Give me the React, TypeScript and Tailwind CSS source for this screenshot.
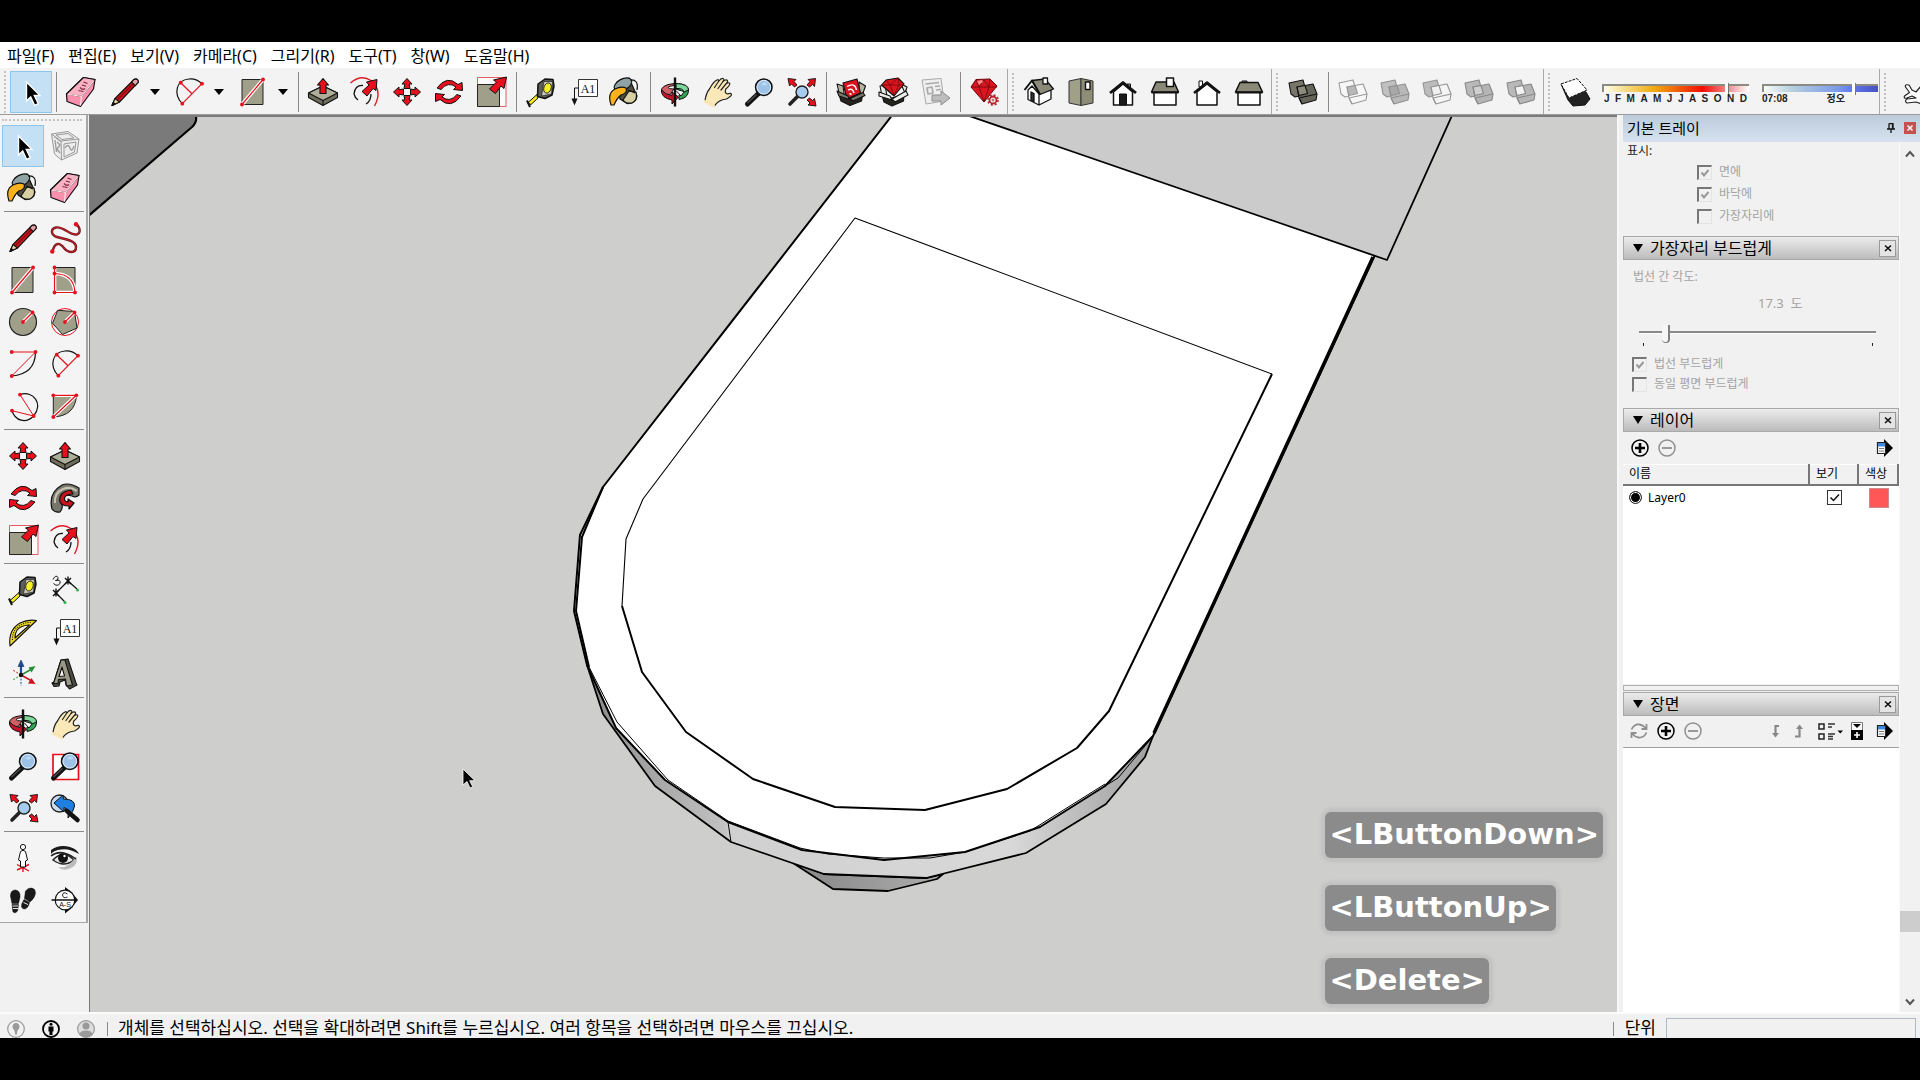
import React from "react";

const RED = "#e8101c";
const OLIVE = "#a09f8a";

/* ---------- icon drawings, each on a 32 x 32 grid ---------- */

const Cursor = () => (
  <path d="M11.5 6V25l4.2-4 4 8.5 3.6-1.8-4-8.2h5.7z" fill="#000" stroke="#fff" strokeWidth="1.4" />
);

const Eraser = () => (
  <g stroke="#111" strokeWidth="1.2" strokeLinejoin="round">
    <path d="M18.5 1.5 30 3.5 28.5 13 15.5 30.5 2 25.5 1.5 18z" fill="#fb8fae" />
    <path d="M18.5 1.5 30 3.5 16.5 20.5 1.5 18z" fill="#fbb0c4" />
    <path d="M29 4.5 16.5 20.5 2.5 18.2M16.5 20.5 15.5 29.5" stroke="#ffe6ec" fill="none" />
    <path d="M13.5 14.5l5 1M15 11.5q3 3 5 1M17 9l4 1.2M18.5 6l4 1.5" stroke="#7a2a45" fill="none" />
  </g>
);

const Pencil = () => (
  <g stroke="#111" strokeWidth="1.1" strokeLinejoin="round">
    <path d="M3 29.5 6 22.5 25 3.5q4-2 4.5 2.5L10.5 26z" fill="#d2141c" />
    <path d="M3 29.5 6 22.5 10.5 26z" fill="#e9d9a5" />
    <path d="M3 29.5l1.3-3 1.8 1.4z" fill="#111" />
    <path d="M22.5 6l3.8 3.6 3-3.4q0-4-4.3-2.8z" fill="#e6a0a8" />
    <path d="M8.5 23.5 24 8" stroke="#7d0a10" />
  </g>
);

const Freehand = () => (
  <g>
    <path
      d="M27 2c5 4 5 11-1 10.500S13 4 7 5.500 2 13 8 15s19 3 19 10-8 6-12 1-9-7-11.500 3.500"
      fill="none" stroke="#70151b" strokeWidth="2.4"
    />
    <path
      d="M27 2c5 4 5 11-1 10.500S13 4 7 5.500 2 13 8 15s19 3 19 10-8 6-12 1-9-7-11.500 3.500"
      fill="none" stroke="#d3202a" strokeWidth="1"
    />
    <circle cx="27" cy="2.200" r="2.200" fill={RED} />
    <circle cx="3.300" cy="29.500" r="2.200" fill={RED} />
  </g>
);

const Dots = ({ at, r = 1.9 }: { at: number[][]; r?: number }) => (
  <>
    {at.map(([x, y]) => (
      <circle key={`${x}-${y}`} cx={x} cy={y} r={r} fill={RED} />
    ))}
  </>
);

const RedLine = ({ d }: { d: string }) => (
  <g fill="none">
    <path d={d} stroke="#fff" strokeWidth="3.600" />
    <path d={d} stroke={RED} strokeWidth="1.200" />
  </g>
);

const Rectangle = () => (
  <g>
    <path d="M5 3.500H26V28.500H5z" fill={OLIVE} stroke="#222" />
    <RedLine d="M5 28.500 26 3.500" />
    <Dots at={[[5, 28.5], [26, 3.5]]} />
  </g>
);

const RotatedRect = () => (
  <g>
    <path d="M5.500 3.500H26V28.500H5.500z" fill={OLIVE} stroke="#222" />
    <RedLine d="M5.500 3.500V28.500H26Q25 10 5.500 9.500" />
    <Dots at={[[5.5, 3.5], [5.5, 9.5], [5.5, 28.5], [26, 28.5]]} />
  </g>
);

const Circle = () => (
  <g>
    <circle cx="16" cy="16" r="13.500" fill={OLIVE} stroke="#222" strokeWidth="1.200" />
    <RedLine d="M16 16 25.500 6.500" />
    <Dots at={[[16, 16], [25.5, 6.5]]} />
  </g>
);

const Polygon = () => (
  <g>
    <circle cx="16" cy="16" r="13.500" fill="#fff" stroke={RED} />
    <path d="M8.700 4.300 25.500 5.500 28 22 13.500 28.500 3.500 17.300z" fill={OLIVE} stroke="#222" />
    <RedLine d="M16 16 25.500 6.500" />
    <Dots at={[[16, 16], [25.5, 6.5]]} />
  </g>
);

const ArcCenter = () => (
  <g fill="none">
    <path d="M28.500 4.500Q28 26 4.700 28" stroke="#111" strokeWidth="1.200" />
    <path d="M4.700 4H28.500L4.700 28" stroke={RED} />
    <Dots at={[[4.7, 4], [28.5, 4], [4.7, 28]]} />
  </g>
);

const ArcTwoPoint = () => (
  <g fill="none">
    <path d="M9.300 27.700C0 18 3 4 16 3q8-.500 13 5" stroke="#111" strokeWidth="1.200" />
    <path d="M7.700 6.700 18.700 17.500M29 7.700 9.300 27.700" stroke={RED} strokeWidth="1.200" />
    <Dots at={[[7.7, 6.7], [29, 7.7], [9.3, 27.7]]} />
  </g>
);

const ArcThreePoint = () => (
  <g fill="none">
    <path d="M13 4.500C26 0 37 14 26.500 26 19 34 8 31 5 20.500" stroke="#111" strokeWidth="1.200" />
    <path d="M13 4.700 26.700 26 5 20.700" stroke={RED} />
    <Dots at={[[13, 4.7], [26.7, 26], [5, 20.7]]} />
  </g>
);

const Pie = () => (
  <g>
    <path d="M4.300 5.500H27.500Q26 26 4.300 27z" fill={OLIVE} stroke="#222" />
    <RedLine d="M4.300 5.300H27.300L4.300 27" />
    <Dots at={[[4.3, 5.3], [27.3, 5.3], [4.3, 27]]} />
  </g>
);

const Move = () => (
  <g fill={RED} stroke="#111" strokeWidth="1" strokeLinejoin="round">
    {[0, 90, 180, 270].map((a) => (
      <path key={a} transform={`rotate(${a} 16 16)`} d="M16 2.500 21 8H18.200L19 12.500H13L13.800 8H11z" />
    ))}
  </g>
);

const PushPull = () => (
  <g stroke="#111" strokeWidth="1.100" strokeLinejoin="round">
    <path d="M1.500 17 16 10 30.500 17V21.500L16 29.500 1.500 21.500z" fill="#6f6e5c" />
    <path d="M1.500 17 16 10 30.500 17 16 24.500z" fill="#aead98" />
    <path d="M16 24.500V29.500" />
    <path d="M16 2.500 21.500 9H19V17.500H13V9H10.500z" fill={RED} />
  </g>
);

const Rotate = () => (
  <g fill={RED} stroke="#111" strokeWidth="1" strokeLinejoin="round">
    <path d="M4 12Q14-1.500 25 8.500L29 6.500 29.500 14.500 20.500 13.500 23 11Q15 5 8 13.500z" />
    <path d="M28 20Q18 33.500 7 23.500L2.500 25.500 2.500 17.500 11.500 18.500 9 21Q17 27 24 18.500z" />
  </g>
);

const FollowMe = () => (
  <g stroke="#111" strokeWidth="1.200" strokeLinejoin="round">
    <path d="M3 27Q-1 11 13 3 20 0 30 6V13Q27 16 23 14 13 11 12 20 15 25 11 30 6 31 3 27z" fill="#77766a" />
    <path d="M6 21Q5 11 14 7 21 4 28 9" fill="none" stroke="#c6c5b2" strokeWidth="2" />
    <path d="M22 8Q9 10 11 20 13 24 20 24V27L25 21 19 17V20Q14 19 16 15 18 12 24 12z" fill="#c8141c" />
  </g>
);

const Scale = () => (
  <g>
    <path d="M2.500 1.500H31V30.500H2.500z" fill="#fbfbfb" stroke="#e35d62" />
    <path d="M2.500 8.500H24.500V30.500H2.500z" fill={OLIVE} stroke="#222" />
    <path d="M31.500 1 29 12.500 26 10 20.500 17.500 14.500 13 21.500 6 18.500 4z" fill={RED} stroke="#111" strokeLinejoin="round" />
  </g>
);

const Offset = () => (
  <g fill="none">
    <path d="M1.500 7Q12-2 22 4.500 34 14 25.500 30" stroke="#dd1c26" strokeWidth="1.400" />
    <path d="M5 18Q6 9 14 9.500M22 18Q22 25 17 28M5 18Q6 22 9 24" stroke="#111" strokeWidth="1.300" />
    <path d="M28 3.500 27 14.500 24 12.500 18 20 13 15.500 20 9 17.500 6z" fill={RED} stroke="#111" />
  </g>
);

const Tape = () => (
  <g stroke="#111" strokeLinejoin="round">
    <path d="M13 22 6 28.500 2.500 27 12 18.500z" fill="#f7ea1e" />
    <path d="M2 24.500 5 31" strokeWidth="2" />
    <path d="M13 8 20 3 28 3.500 29 10 27 19 20 22.500 12.500 20.500z" fill="#5c5c58" strokeWidth="1.500" />
    <path d="M19 5.500 27.500 5.500 26.500 18 16.500 20z" fill="#c9c9bd" strokeWidth=".6" />
    <ellipse cx="22.500" cy="12" rx="3.600" ry="5.200" transform="rotate(20 22.500 12)" fill="#f6f02a" strokeWidth=".8" />
  </g>
);

const Dimension = () => (
  <g fill="none" stroke="#111" strokeWidth="1.200">
    <path d="M7 19 19 7M7 19l8.500 8.500M19 7l9 8" />
    <path d="M4 16l6 6M10 16l-6 6M7 14.500v8M16 4l6 6M22 4l-6 6M19 2.500v8" strokeWidth="1.400" />
    <path d="M4 5.500Q7 0 9 3.500 9.500 7 6.500 6.500 12 5 11 9.500 8 13 4.500 9.500" strokeWidth="1" />
    <circle cx="16" cy="28.500" r="1.500" fill="#35b048" stroke="none" />
    <circle cx="28.500" cy="16" r="1.500" fill="#35b048" stroke="none" />
  </g>
);

const Protractor = () => (
  <g stroke="#111" strokeWidth="1.100" strokeLinejoin="round">
    <path d="M3 30Q1 14 13 7 21 3 29.500 4.500z" fill="#ecd527" />
    <path d="M8 22Q8 13 15 10.500 19 8.800 22.500 9z" fill="#f4f4f4" />
    <path d="M5.500 24Q5 14 13.500 9 19 6 25 6.500" fill="none" strokeDasharray="1 1.300" />
  </g>
);

const TextLabel = () => (
  <g>
    <path d="M11.500 3.500H30.500V20.500H11.500z" fill="#fff" stroke="#333" />
    <path d="M11 12H7.500V24" fill="none" stroke="#111" />
    <path d="M4.500 22.500h6L7.500 29.500z" fill="#111" />
    <text x="21" y="16.500" textAnchor="middle" fontSize="12" fontFamily="Liberation Serif, serif" fill="#111">A1</text>
  </g>
);

const Axes = () => (
  <g>
    <path d="M14 19V7" stroke="#1c4fa0" strokeWidth="2.200" />
    <path d="M14 2l3 6.500H11z" fill="#1c4fa0" stroke="#123" strokeWidth=".5" />
    <path d="M14 17 24 11.500" stroke="#248f34" strokeWidth="1.500" />
    <path d="M28.500 8 24.500 14.500 21.500 9.500z" fill="#248f34" />
    <path d="M14 17 24 22.500" stroke="#c8141c" strokeWidth="1.500" />
    <path d="M28.500 26 21 25.500 24.500 20z" fill="#c8141c" />
    <path d="M14 17V28" stroke="#1c4fa0" strokeDasharray="2 1.500" />
    <path d="M14 17 5 11.500" stroke="#c8141c" strokeDasharray="2 1.500" />
    <path d="M14 17 5 22.500" stroke="#248f34" strokeDasharray="2 1.500" />
    <circle cx="14" cy="17" r="2.200" fill="#111" />
  </g>
);

const Text3D = () => (
  <g stroke="#111" strokeWidth="1.100" strokeLinejoin="round">
    <path d="M12 2 19 1 27 25 28 27 20.500 31 17 27 16 22 11 24 10 28 5 28.500 3 25 5 24z" fill="#4d4c42" />
    <path d="M12 2 16 2 23.500 27 17.500 28 16.500 21 9.500 21.500 9 25.500 3.500 25.500 5 24z" fill="#9a9987" />
    <path d="M13 9 15.500 18 10 18.500z" fill="#f4f4f4" />
  </g>
);

const Orbit = () => (
  <g stroke="#111" strokeWidth="1" strokeLinejoin="round">
    <path d="M15 7.500Q1 9 2.500 16 4 19 10 20L15 13Q9 13 9 11.500 10 10 15 9.500z" fill="#d06066" />
    <path d="M17 7.500Q30 8 29.500 15 29 22 20 23.500L20 19Q24 18 24 15.500L17 13z" fill="#2fa452" />
    <path d="M17 7.500Q30 8 29.500 14L25 16Q24 12 17 12.500z" fill="#7ed69a" />
    <path d="M2.500 14Q2 22 13 24V28L19.500 21 13 16V19.500Q6 18.500 2.500 14z" fill="#c4142a" />
    <path d="M16 1.500V30.500" strokeWidth="2.400" />
    <path d="M17.500 15 22 20 25 16" fill="#fff" />
  </g>
);

const Hand = () => (
  <g stroke="#222" strokeWidth="1.200" strokeLinejoin="round" strokeLinecap="round">
    <path
      d="M4 25Q5 17 8.500 13 12 6 16 4q2-1 1.500 1.500 3-4 5-2.800 1 .500-.500 2.800 3-2.500 4.500-1 .800 1-1 3 2.500-1.500 3.300 0 .500 1.500-4 5.500-1.500 4 1.500 5 4-1.500 4.200.500.100 1.500-5 4.500Q17 24 13.500 30z"
      fill="#fae8b8"
    />
    <path d="M17.500 5.500 13.500 11.500M22 5.500 17 12.500M25.300 7.500 20 14" fill="none" />
    <path d="M4 25.500 12.500 30" stroke="#fae8b8" strokeWidth="3" />
  </g>
);

const Glass = () => (
  <g>
    <path d="M15.500 17.500 4.500 28" stroke="#111" strokeWidth="5" strokeLinecap="round" />
    <path d="M13.500 18.500 4.500 27" stroke="#4a4a4a" strokeWidth="1.500" />
    <circle cx="20.800" cy="11.200" r="8.200" fill="#9cc2e6" stroke="#111" strokeWidth="1.600" />
    <circle cx="20.800" cy="11.200" r="6.800" fill="none" stroke="#dceafa" strokeWidth="1" />
    <path d="M18 8q4-3 6.500 0-3 3-6.500 0" fill="#bdd8f2" />
  </g>
);

const ZoomWindow = () => (
  <g>
    <path d="M4 4.500H29.500V29.500H4z" fill="#fff" stroke={RED} strokeWidth="1.700" />
    <Glass />
  </g>
);

const OutArrows = () => (
  <g fill={RED} stroke="#111" strokeWidth=".9" strokeLinejoin="round">
    <path d="M3 2.500 11 3.500 9 5.500 12 9 9.500 11 6.500 8 4.500 10z" />
    <path d="M30.500 2.500 29.500 10.500 27.500 8.500 24.500 11 22 9 25 5.500 23 3.500z" />
    <path d="M31 30 23 29 25 27 22 24 24.500 22 27.500 24.500 29.500 22.500z" />
  </g>
);

const ZoomExtents = () => (
  <g>
    <OutArrows />
    <path d="M13 20 5 28" stroke="#222" strokeWidth="3.600" strokeLinecap="round" />
    <circle cx="17" cy="16" r="6" fill="#a6cbec" stroke="#222" strokeWidth="1.400" />
  </g>
);

const ZoomPrevious = () => (
  <g>
    <circle cx="10.500" cy="11.500" r="8.500" fill="#c9dcef" stroke="#222" strokeWidth="1.300" />
    <path d="M5 11 14 3 14.500 7Q26 7 25.500 14 25 19 19 26 20 17 15 15.500L15 20z" fill="#1e7fe0" stroke="#111" />
    <path d="M18 19 28.500 28" stroke="#111" strokeWidth="4.500" strokeLinecap="round" />
  </g>
);

const PositionCamera = () => (
  <g>
    <path d="M10 28 22 22.500M10 22.500 22 29M16 21v9" stroke={RED} strokeWidth="1.400" />
    <path d="M13.500 9.500Q16 7 18.500 9.500L20.500 18 18.500 19V25H13.500V19L11.500 18z" fill="#fff" stroke="#111" />
    <circle cx="16" cy="5" r="2.600" fill="#fff" stroke="#111" />
  </g>
);

const LookAround = () => (
  <g>
    <path d="M2 8Q10 2 21 5 28 7 30 12 20 6 12 7.500 5 8 2 12z" fill="#1a1a1a" />
    <path d="M4 18Q14 7 25 18 15 26 4 18z" fill="#e8e8e8" stroke="#222" strokeWidth="1.500" />
    <circle cx="14" cy="16" r="5" fill="#111" />
    <circle cx="15.500" cy="14" r="1.200" fill="#fff" />
    <path d="M27 14Q30 22 22 26 14 30 9 25 20 27 27 14z" fill="#bbb" />
    <path d="M2 14Q12 6 27 17" stroke="#222" fill="none" strokeWidth="1.500" />
  </g>
);

const Walk = () => (
  <g fill="#1a1a1a" stroke="#000" strokeWidth=".5">
    <path d="M3.500 12Q3.500 6 8.500 6 13.500 7 13 13L11.500 19.500 5 19.500z" />
    <path d="M5 20.500 11.500 20.500 10.500 27Q8.500 30 6 28z" />
    <path d="M18.500 7Q23 2 27.500 5.500 30 10 25.500 15.500L23 18 17.500 14.500z" />
    <path d="M17 15.500 22.500 18.500Q21 25 17 25 13.500 24 15 19.500z" />
    <path d="M5.500 22h5.500M6 24.500h5M16.500 18.500l4.500 2" stroke="#fff" strokeWidth=".9" />
  </g>
);

const Section = () => (
  <g>
    <path d="M16 3 24 9H16zM29 16 24 10V22zM16 29.500 24 23H16z" fill="#111" />
    <circle cx="16" cy="16" r="9.800" fill="#fff" stroke="#111" strokeWidth="1.200" />
    <path d="M2.500 16H28" stroke="#111" strokeWidth="1.500" />
    <path d="M18.500 10Q14 7 13.500 11 14 15 18.500 13" fill="none" stroke="#222" />
    <text x="16" y="23" textAnchor="middle" fontSize="7" fontFamily="Liberation Sans, sans-serif" fill="#111">A-S</text>
  </g>
);

const Bucket = () => (
  <g stroke="#111" strokeWidth="1.200" strokeLinejoin="round">
    <path d="M8 6 20 2 28 20Q27 28 18 27.500L11 23z" fill="#4f4d40" />
    <path d="M20 15l7 1q2 8-4 11-6 1-9-3z" fill="#d8d0a4" />
    <ellipse cx="14" cy="8.500" rx="9.500" ry="5.500" transform="rotate(-28 14 8.500)" fill="#8fa2a4" />
    <path d="M2 29Q-2 17 6 13 12 10 17 12 19 17 12 19 8 22 5 29z" fill="#fbb21c" />
    <path d="M21 4Q30 3 28 14M19 14l7 3" fill="none" />
  </g>
);

const Component = () => (
  <g fill="none" stroke="#999" strokeWidth="1" strokeLinejoin="round">
    <path d="M2.500 4 19 1.500 30 9 28 23 12.500 30 5.500 24z" fill="#ededed" />
    <path d="M2.500 4 12 11 30 9M12 11l.500 19M5 6.500 11.500 11.500M15 14l12-2-1.500 10-10.500 5zM7 5l12-1.500 6 4.500-12 1.500z" />
    <path d="M16 18q3-5 5 0t4-2M8 12l3 3-3 4 3 4M6 10l1.500 12" strokeWidth="1.300" />
  </g>
);

const Warehouse = () => (
  <g stroke="#111" strokeWidth="1.100" strokeLinejoin="round">
    <path d="M2 8 8 10 10 24 5 21zM24 6 30.500 10 28 17 24 20z" fill="#b5b4a0" />
    <path d="M8 7 22 3 25.500 17 12 23z" fill="#d9141e" />
    <path d="M12 10.500Q20 6 21.500 14M13 14q4.500-2.500 6 3M14.500 17.500l2 1" stroke="#fff" fill="none" strokeWidth="1.400" />
    <path d="M4 18 14 22 28 17 26.500 25 15 29.500 6 25z" fill="#25241f" />
    <path d="M2 15 13 20 14 23.500 4 20zM15 22.500 28 16.500 30 19.500 18 25z" fill="#77766a" />
  </g>
);

const ExtWarehouse = () => (
  <g stroke="#111" strokeWidth="1.100" strokeLinejoin="round">
    <path d="M3 10 8 9 10 20 5 20zM24 8 30 11 28 17z" fill="#e8e8e4" />
    <path d="M4.500 9 9 4 21 2 27 8 17 20z" fill="#d9141e" />
    <path d="M5 9H27M9 4l4 5 8-7 1 7M13 9l4 10 5-10" fill="none" stroke="#74060c" strokeWidth=".8" />
    <path d="M5 19 15 22 27 18 26.500 25 15 30 7 26z" fill="#25241f" />
    <path d="M2 16 13 20 15 24 2 20zM15 23 29 15 31 19 18 26z" fill="#ededea" />
  </g>
);

const LayOut = () => (
  <g stroke="#aaa" strokeLinejoin="round">
    <path d="M3 4 22 2.500 25 25 7 28z" fill="#eee" />
    <path d="M6.500 8 20 6.500M8 12l5-1 1 6-5 1zM16 10.500l5-.500M17 14l5-.500" fill="none" strokeWidth="1.600" />
    <path d="M13 19H22V15L31 22 22 29V25H13z" fill="#bdbdbd" stroke="#8d8d8d" />
  </g>
);

const Ruby = () => (
  <g stroke="#6c050b" strokeWidth="1" strokeLinejoin="round">
    <path d="M2 11 7 3.500 21 3 28 10 15 26z" fill="#dc1620" />
    <path d="M2 11H28M7 3.500 10 11 15 4l5 7 1-8M10 11l5 15 5-15" fill="none" strokeWidth=".8" />
    <path d="M8 5l5-1 1 2-4 3z" fill="#ff8a8f" stroke="none" />
    <circle cx="24" cy="24" r="3.500" fill="#f3f3f3" stroke="#b5232b" strokeWidth="1.800" />
    <circle cx="24" cy="24" r="5" fill="none" stroke="#b5232b" strokeWidth="1.600" strokeDasharray="2 1.930" />
    <circle cx="24" cy="24" r="1" fill="#fff" stroke="#b5232b" strokeWidth=".8" />
  </g>
);

const HouseIso = () => (
  <g stroke="#111" strokeWidth="1.300" strokeLinejoin="round">
    <path d="M5 14 9 10 16 18V29L5 23.500zM16 18 28 14V23L16 29z" fill="#fff" />
    <path d="M9 4.500 22 3 30.500 13 17 18.500z" fill="#8b8a78" />
    <path d="M1.500 14 9 4.500 17 18.500" fill="none" strokeWidth="2" />
    <path d="M20 2h4.500v6H20z" fill="#fff" />
    <path d="M8 16l3 1.500v8L8 24z" fill="#333" />
  </g>
);

const HouseTop = () => (
  <g stroke="#333" strokeWidth="1" strokeLinejoin="round">
    <path d="M4 5 16 2.500V29.500L4 27z" fill="#a09f88" />
    <path d="M16 2.500 28 5V27L16 29.500z" fill="#8e8d77" />
    <path d="M20.500 6h4.500v7.500h-4.500z" fill="#fff" stroke="#111" strokeWidth="1.400" />
  </g>
);

const HouseFront = () => (
  <g stroke="#111" strokeLinejoin="round">
    <path d="M20 8h3.500v5H20z" fill="#8b8a78" />
    <path d="M6.500 16 16 8l9.500 8V29H6.500z" fill="#fff" strokeWidth="1.500" />
    <path d="M3 17 16 6.500 29 17" fill="none" strokeWidth="2.800" />
    <path d="M12.500 18h7v11h-7z" fill="#1a1a1a" />
  </g>
);

const HouseSide = () => (
  <g stroke="#111" strokeWidth="1.500" strokeLinejoin="round">
    <path d="M5 16H27V29H5z" fill="#fff" />
    <path d="M7 6H25L29.500 16H2.500z" fill="#8b8a78" />
    <path d="M2.500 16.500h27" strokeWidth="2" />
    <path d="M17.500 2h7v8.500h-7z" fill="#fff" />
  </g>
);

const HouseBack = () => (
  <g stroke="#111" strokeLinejoin="round">
    <path d="M8 5h3.500v6H8z" fill="#fff" />
    <path d="M6 16 16 8l10 8V29H6z" fill="#fff" strokeWidth="1.500" />
    <path d="M3 17 16 6.500 29 17" fill="none" strokeWidth="2.400" />
  </g>
);

const HouseLeft = () => (
  <g stroke="#111" strokeWidth="1.500" strokeLinejoin="round">
    <path d="M9 5h5v2H9z" fill="#8b8a78" strokeWidth="1" />
    <path d="M5 16H27V29H5z" fill="#fff" />
    <path d="M7 6.500H25L29.500 16H2.500z" fill="#8b8a78" />
    <path d="M2.500 16.500h27" strokeWidth="2" />
  </g>
);

const Solid = ({ a, b, c, line }: { a: string; b: string; c: string; line: string }) => (
  <g stroke={line} strokeWidth="1.100" strokeLinejoin="round">
    <path d="M2 7 16 4 19 15 21 18 8 21 4 18z" fill={a} />
    <path d="M10 11 26 8 30 18 29 24 15 28 12 22z" fill={b} />
    <path d="M12 22 30 18M12 22l3 6" fill="none" />
    <path d="M10 11l8-1.500 2.500 8-8.500 2z" fill={c} />
  </g>
);
const OuterShell = () => <Solid a="#77766a" b="#66655a" c="#8d8c7c" line="#111" />;
const Intersect = () => <Solid a="#f7f7f7" b="#f7f7f7" c="#b8b8b8" line="#999" />;
const Union = () => <Solid a="#c0c0c0" b="#b8b8b8" c="#a9a9a9" line="#909090" />;
const Subtract = () => <Solid a="#bcbcbc" b="#f5f5f5" c="#f0f0f0" line="#949494" />;
const Trim = () => <Solid a="#b9b9b9" b="#b5b5b5" c="#cfcfcf" line="#888" />;
const Split = () => <Solid a="#b9b9b9" b="#b6b6b6" c="#f2f2f2" line="#888" />;

const Shadow = () => (
  <g stroke="#111" strokeWidth="1" strokeLinejoin="round">
    <path d="M2 8 9 24 14 30 26 29 31 23 27 16z" fill="#222" />
    <path d="M2 8 18 2.500 28 14 10 22z" fill="#fff" strokeDasharray="3 1" />
  </g>
);

const PointHand = () => (
  <path
    d="M32 7 26 10 21 16 17 14 14 9Q9.500 8 10.500 11L14.500 16.500 9.500 20Q8.500 23 12 22L17 20 21 22 12 23Q9 25 12 27L21 26 32 30"
    fill="#fff" stroke="#222" strokeWidth="1.200" strokeLinejoin="round"
  />
);

const Icon = ({ draw: Draw }: { draw: () => React.ReactElement }) => (
  <svg viewBox="0 0 32 32" className="size-8 shrink-0" aria-hidden="true">
    <Draw />
  </svg>
);

/* ---------- toolbars ---------- */

type ToolDef = [string, () => React.ReactElement];

const Tool = ({ tool, active }: { tool: ToolDef; active?: boolean }) => (
  <button
    type="button"
    aria-label={tool[0]}
    className={
      active
        ? "flex size-[42px] shrink-0 items-center justify-center border border-[#8fc4ec] bg-[#c4e0f5]"
        : "flex size-[42px] shrink-0 items-center justify-center"
    }
  >
    <Icon draw={tool[1]} />
  </button>
);

const ComboTool = ({ tool }: { tool: ToolDef }) => (
  <div className="flex w-16 shrink-0 items-center pl-[2px]">
    <Tool tool={tool} />
    <button type="button" aria-label={`${tool[0]} 옵션`} className="flex h-[42px] w-[18px] items-center justify-center">
      <svg viewBox="0 0 12 8" className="h-2 w-3" aria-hidden="true"><path d="M1 1h10L6 7z" fill="#000" /></svg>
    </button>
  </div>
);

const Sep = () => (
  <div className="flex w-2 shrink-0 justify-center py-px"><div className="w-px bg-[#8a8a8a]" /></div>
);

const GroupSep = () => (
  <div className="-my-[2px] flex w-3 shrink-0 justify-between pr-1 pl-px">
    <div className="w-px bg-[#a9a9a9]" />
    <div className="my-1 border-l-2 border-dotted border-[#bdbdbd]" />
  </div>
);

const tools = (list: ToolDef[]) => list.map((t) => <Tool key={t[0]} tool={t} />);

const MENUS = ["파일(F)", "편집(E)", "보기(V)", "카메라(C)", "그리기(R)", "도구(T)", "창(W)", "도움말(H)"];
const MONTHS = ["J", "F", "M", "A", "M", "J", "J", "A", "S", "O", "N", "D"];

const TopToolbar = () => (
  <div role="toolbar" className="flex items-stretch overflow-hidden border-b border-[#9b9b9b] bg-[#f3f3f3] pt-[3px] pb-px">
    <div className="flex w-[10px] shrink-0 justify-center"><div className="border-l-2 border-dotted border-[#c4c4c4]" /></div>
    <Tool tool={["선택", Cursor]} active />
    <Sep />
    {tools([["지우개", Eraser]])}
    <ComboTool tool={["선", Pencil]} />
    <ComboTool tool={["호", ArcTwoPoint]} />
    <ComboTool tool={["직사각형", Rectangle]} />
    <Sep />
    {tools([["밀기/끌기", PushPull], ["오프셋", Offset], ["이동", Move], ["회전", Rotate], ["배율", Scale]])}
    <Sep />
    {tools([["줄자", Tape], ["문자", TextLabel], ["페인트 통", Bucket]])}
    <Sep />
    {tools([["궤도", Orbit], ["이동 보기", Hand], ["확대/축소", Glass], ["범위 확대", ZoomExtents]])}
    <Sep />
    {tools([["3D Warehouse", Warehouse], ["Extension Warehouse", ExtWarehouse], ["LayOut", LayOut]])}
    <Sep />
    {tools([["확장 프로그램 관리자", Ruby]])}
    <GroupSep />
    {tools([["등각", HouseIso], ["평면", HouseTop], ["정면", HouseFront], ["우측면", HouseSide], ["후면", HouseBack], ["좌측면", HouseLeft]])}
    <GroupSep />
    {tools([["외부 쉘", OuterShell]])}
    <Sep />
    {tools([["교차", Intersect], ["결합", Union], ["빼기", Subtract], ["자르기", Trim], ["나누기", Split]])}
    <GroupSep />
    {tools([["그림자", Shadow]])}
    <div className="ml-[6px] flex w-[147px] shrink-0 flex-col pt-[13px] font-['Liberation_Sans','Noto_Sans_CJK_KR',sans-serif] text-[10px] leading-3 font-bold text-[#222]">
      <input
        type="range" aria-label="날짜" defaultValue={86}
        className="h-2 w-full appearance-none border-t-2 border-l-2 border-[#8b8b83] bg-[linear-gradient(90deg,#fffdee,#f7dc86_15%,#f0a90c_35%,#f20d05_68%,#f2a0a0_88%,#fff)] [&::-webkit-slider-thumb]:h-3 [&::-webkit-slider-thumb]:w-1 [&::-webkit-slider-thumb]:appearance-none [&::-webkit-slider-thumb]:border-r [&::-webkit-slider-thumb]:border-[#777] [&::-webkit-slider-thumb]:bg-white"
      />
      <div className="mt-px flex justify-between px-[2px]">
        {MONTHS.map((m, i) => <span key={i}>{m}</span>)}
      </div>
    </div>
    <div className="ml-[13px] flex w-[116px] shrink-0 flex-col pt-[13px] font-['Liberation_Sans','Noto_Sans_CJK_KR',sans-serif] text-[10px] leading-3 font-bold text-[#222]">
      <input
        type="range" aria-label="시간" defaultValue={80}
        className="h-2 w-full appearance-none border-t-2 border-l-2 border-[#8b8b83] bg-[linear-gradient(90deg,#f7fbf7,#b5cede_25%,#7b9bea_65%,#5f74ee_78%,#4653bd)] [&::-webkit-slider-thumb]:h-3 [&::-webkit-slider-thumb]:w-1 [&::-webkit-slider-thumb]:appearance-none [&::-webkit-slider-thumb]:border-r [&::-webkit-slider-thumb]:border-[#777] [&::-webkit-slider-thumb]:bg-white"
      />
      <div className="mt-px flex justify-between pr-[33px]"><span>07:08</span><span>정오</span></div>
    </div>
    <GroupSep />
    {tools([["상호 작용", PointHand]])}
  </div>
);

const SIDE: ToolDef[][] = [
  [["선택", Cursor], ["구성 요소", Component], ["페인트 통", Bucket], ["지우개", Eraser]],
  [["선", Pencil], ["자유형", Freehand], ["직사각형", Rectangle], ["회전 직사각형", RotatedRect], ["원", Circle], ["다각형", Polygon], ["호", ArcCenter], ["2점 호", ArcTwoPoint], ["3점 호", ArcThreePoint], ["파이", Pie]],
  [["이동", Move], ["밀기/끌기", PushPull], ["회전", Rotate], ["따라가기", FollowMe], ["배율", Scale], ["오프셋", Offset]],
  [["줄자", Tape], ["치수", Dimension], ["각도기", Protractor], ["문자", TextLabel], ["축", Axes], ["3D 문자", Text3D]],
  [["궤도", Orbit], ["이동 보기", Hand], ["확대/축소", Glass], ["창 확대", ZoomWindow], ["범위 확대", ZoomExtents], ["이전", ZoomPrevious]],
  [["카메라 배치", PositionCamera], ["둘러보기", LookAround], ["걷기", Walk], ["단면", Section]],
];

const SideToolbar = () => (
  <div className="w-[89px] shrink-0 bg-[#f1f1f1]">
    <div role="toolbar" className="mr-px border-r-2 border-b border-[#a6a6a6] bg-[#f4f4f4] pt-1 pb-px pl-[2px]">
      <div className="mr-1 mb-1 border-t-2 border-dotted border-[#c4c4c4]" />
      {SIDE.map((group, g) => (
        <React.Fragment key={g}>
          {g > 0 && <div className="flex h-2 items-start pt-[2px] pr-[2px] pl-[2px]"><div className="h-px flex-1 bg-[#8a8a8a]" /></div>}
          <div className="flex flex-wrap">
            {group.map((t, i) => <Tool key={t[0]} tool={t} active={g === 0 && i === 0} />)}
          </div>
        </React.Fragment>
      ))}
    </div>
  </div>
);

/* ---------- model view ---------- */

const Model = () => (
  <svg viewBox="90 117 1527 894" preserveAspectRatio="xMinYMin meet" className="absolute inset-0 size-full overflow-visible" role="img" aria-label="모델">
    <defs>
      <linearGradient id="wall" x1="590" x2="1153" y1="0" y2="0" gradientUnits="userSpaceOnUse">
        <stop offset="0" stopColor="#8d8d8d" />
        <stop offset=".24" stopColor="#c2c2c2" />
        <stop offset=".25" stopColor="#d0d0d0" />
        <stop offset=".75" stopColor="#d8d8d8" />
        <stop offset="1" stopColor="#9e9e9e" />
      </linearGradient>
      <linearGradient id="lug" x1="793" x2="943" y1="0" y2="0" gradientUnits="userSpaceOnUse">
        <stop offset="0" stopColor="#868686" />
        <stop offset="1" stopColor="#adadad" />
      </linearGradient>
    </defs>
    <g stroke="#000" strokeLinejoin="round">
      <path d="M80 100H192L196 117Q197 122 192 127L80 223z" fill="#7a7a7a" strokeWidth="2.200" />
      <path d="M793 863 833 889 888 891 937 879 943 874 926 878 824 874z" fill="url(#lug)" strokeWidth="1.800" />
      <path d="M587 665 603 714 655 786 731 842 824 874 926 878 1026 853 1106 804 1145 757 1153 736 1040 800 884 850 700 790z" fill="url(#wall)" strokeWidth="1.800" />
      <path d="M904 100 603 487 580 535 574 611 587 665 616 728 665 780 728 822 802 850 884 860 965 852 1040 827 1105 786 1153 736 1374 257 1450 80z" fill="#fff" strokeWidth="2" />
      <path d="M603 487 582 537 576 611 589 667" fill="none" strokeWidth="2" />
      <path d="M589 667 617 722 668 780 728 821 800 848 828 854 884 858 930 858 965 852 1030 831 1105 784" fill="none" strokeWidth="1" />
      <path d="M1373 257 1154 733" fill="none" strokeWidth="3.400" />
      <path d="M728 822 731 842M1105 786 1118 778 1150 740" fill="none" strokeWidth="1" />
      <path d="M920 99 1387 260 1459 100z" fill="#cbcbcb" strokeWidth="1.800" />
      <path d="M622 606 626 539 643 499 855 218 1272 374" fill="none" strokeWidth="1.100" />
      <path d="M1272 374 1109 711 1077 748 1007 789 925 810 835 807 753 779 686 732 642 672 622 606" fill="none" strokeWidth="2" />
    </g>
    <path d="M463 769V785l4-3.500 3 6.500 2.700-1.300-3-6H475z" fill="#000" stroke="#fff" strokeWidth=".8" />
  </svg>
);

const KEYS = ["<LButtonDown>", "<LButtonUp>", "<Delete>"];

const Viewport = () => (
  <main className="relative min-w-0 flex-1 overflow-hidden border-t-2 border-l border-[#7b7b7b] bg-[#cececc]">
    <Model />
    <div className="absolute right-[14px] bottom-2 flex flex-col items-start gap-[27px]">
      {KEYS.map((k) => (
        <kbd
          key={k}
          className="rounded-md bg-[#8b8b8b] px-1 pt-1 pb-[6px] font-['DejaVu_Sans',sans-serif] text-[29px] leading-[36px] font-bold text-white shadow-[0_0_3px_4px_#c2c2c2]"
        >
          {k}
        </kbd>
      ))}
    </div>
  </main>
);

/* ---------- tray ---------- */

const SunkCheck = ({ label, checked }: { label: string; checked?: boolean }) => (
  <label className="flex items-center gap-[7px] text-[12px] leading-5 text-[#a3a3a3]">
    <span className="grid size-[15px]">
      <input
        type="checkbox" disabled defaultChecked={checked}
        className="col-start-1 row-start-1 size-[15px] appearance-none border-t-2 border-r border-b border-l-2 border-t-[#777] border-r-[#e3e3e3] border-b-[#e3e3e3] border-l-[#777] bg-[#f1f1f1]"
      />
      {checked && (
        <svg viewBox="0 0 15 15" className="col-start-1 row-start-1 size-[15px]" aria-hidden="true">
          <path d="M4.500 7.500 7 10.500 11.500 5" fill="none" stroke="#999" strokeWidth="2" />
        </svg>
      )}
    </span>
    {label}
  </label>
);

const PanelHeader = ({ title }: { title: string }) => (
  <div className="flex h-6 items-center border border-[#a8a8a8] bg-linear-to-b from-[#ececec] to-[#bcbcbc] pr-[2px] pl-2">
    <svg viewBox="0 0 12 10" className="h-[10px] w-3" aria-hidden="true"><path d="M1 1h10L6 9z" fill="#000" /></svg>
    <h2 className="ml-[6px] flex-1 pb-px text-[16px] leading-5 text-black">{title}</h2>
    <button type="button" aria-label={`${title} 닫기`} className="flex size-[17px] items-center justify-center border border-[#999] bg-[#e4e4e4]">
      <svg viewBox="0 0 8 8" className="size-2" aria-hidden="true"><path d="M1 1.500 7 7M7 1.500 1 7" stroke="#111" strokeWidth="1.600" /></svg>
    </button>
  </div>
);

const RoundBtn = ({ label, plus, dim }: { label: string; plus?: boolean; dim?: boolean }) => (
  <button type="button" aria-label={label} className={dim ? "text-[#8f8f8f]" : "text-black"}>
    <svg viewBox="0 0 18 18" className="size-[18px]" fill="none" stroke="currentColor" aria-hidden="true">
      <circle cx="9" cy="9" r="8" strokeWidth="1.500" />
      <path d={plus ? "M4 9h10M9 4v10" : "M4 9h10"} strokeWidth={plus ? 2.6 : 1.8} />
    </svg>
  </button>
);

const DetailsBtn = () => (
  <button type="button" aria-label="세부 정보">
    <svg viewBox="0 0 18 18" className="size-[18px]" aria-hidden="true">
      <path d="M8 0 17 9 8 18z" fill="#000" />
      <path d="M1.500 3.500h8v11h-8z" fill="#fff" stroke="#222" strokeWidth="1.200" />
      <path d="M2 4h7v3.500H2z" fill="#3c8be0" />
      <path d="M3 9.500h5M3 12h5" stroke="#777" />
    </svg>
  </button>
);

const HEAD = "border-r-2 border-b-2 border-t border-t-white border-r-[#777] border-b-[#777] pl-[6px] text-left font-normal";

const Tray = () => (
  <aside className="flex w-[303px] shrink-0 flex-col border-l-2 border-[#f8f8f8] bg-[#f1f1f1] pl-1">
    <div className="flex h-[27px] shrink-0 items-center bg-linear-to-b from-[#bccbda] to-[#d6e2f0] pr-1 pb-px pl-1">
      <h1 className="flex-1 text-[15px] leading-[22px] text-black">기본 트레이</h1>
      <button type="button" aria-label="고정" className="mr-[9px]">
        <svg viewBox="0 0 8 10" className="h-[10px] w-2" aria-hidden="true"><path d="M2 0.700H6V5.500M2 0.500V5.500M0 6H8M4 6V10M5.500 0.500V5.500" stroke="#111" strokeWidth="1.300" fill="none" /></svg>
      </button>
      <button type="button" aria-label="닫기" className="flex size-3 items-center justify-center bg-[#c75050]">
        <svg viewBox="0 0 8 8" className="size-2" aria-hidden="true"><path d="M1.500 1.500 6.500 6.500M6.500 1.500 1.500 6.500" stroke="#fff" strokeWidth="1.500" /></svg>
      </button>
    </div>
    <div className="flex min-h-0 flex-1">
      <div className="flex min-w-0 flex-1 flex-col">
        <section className="flex h-[94px] shrink-0 flex-col">
          <p className="pl-1 text-[12px] leading-[18px] text-[#222]">표시:</p>
          <div className="mt-[2px] flex flex-col gap-[2px] pl-[74px]">
            <SunkCheck label="면에" checked />
            <SunkCheck label="바닥에" checked />
            <SunkCheck label="가장자리에" />
          </div>
        </section>
        <section className="flex h-[172px] shrink-0 flex-col text-[12px] text-[#a3a3a3]">
          <PanelHeader title="가장자리 부드럽게" />
          <label htmlFor="angle" className="mt-[7px] pl-[10px] leading-5">법선 간 각도:</label>
          <output htmlFor="angle" className="mt-[6px] pl-[135px] text-[13px] leading-5">17.3&nbsp; 도</output>
          <input
            id="angle" type="range" disabled defaultValue={10}
            className="mt-[9px] ml-4 h-[20px] w-[237px] appearance-none [&::-webkit-slider-runnable-track]:h-[3px] [&::-webkit-slider-runnable-track]:border-t-2 [&::-webkit-slider-runnable-track]:border-[#8a8a8a] [&::-webkit-slider-runnable-track]:bg-white [&::-webkit-slider-thumb]:-mt-[8px] [&::-webkit-slider-thumb]:h-[18px] [&::-webkit-slider-thumb]:w-2 [&::-webkit-slider-thumb]:appearance-none [&::-webkit-slider-thumb]:rounded-b [&::-webkit-slider-thumb]:border-r-2 [&::-webkit-slider-thumb]:border-b [&::-webkit-slider-thumb]:border-[#808080] [&::-webkit-slider-thumb]:bg-[#f7f7f7]"
          />
          <div className="mt-px mr-[26px] ml-5 flex h-[3px] justify-between"><span className="w-px bg-[#222]" /><span className="w-px bg-[#222]" /></div>
          <div className="mt-[8px] flex flex-col pl-[9px]">
            <SunkCheck label="법선 부드럽게" checked />
            <SunkCheck label="동일 평면 부드럽게" />
          </div>
        </section>
        <section className="flex h-[277px] shrink-0 flex-col border-b border-[#f1f1f1]">
          <PanelHeader title="레이어" />
          <div className="flex h-8 shrink-0 items-center gap-[9px] pr-[5px] pb-px pl-2">
            <RoundBtn label="레이어 추가" plus />
            <RoundBtn label="레이어 삭제" dim />
            <span className="flex-1" />
            <DetailsBtn />
          </div>
          <div className="flex-1 bg-white">
            <table className="w-full table-fixed border-collapse text-[12px] text-black">
              <thead>
                <tr className="h-5 bg-[#f1f1f1] leading-4">
                  <th className={HEAD}>이름</th>
                  <th className={`${HEAD} w-[49px]`}>보기</th>
                  <th className={`${HEAD} w-[40px]`}>색상</th>
                </tr>
              </thead>
              <tbody>
                <tr className="h-[25px]">
                  <td className="pl-[6px]">
                    <label className="flex items-center gap-[6px]">
                      <input type="radio" name="layer" defaultChecked className="size-[13px] appearance-none rounded-full border border-[#333] bg-black shadow-[inset_0_0_0_1px_#fff]" />
                      Layer0
                    </label>
                  </td>
                  <td>
                    <span className="ml-[18px] grid size-[15px]">
                      <input type="checkbox" aria-label="Layer0 보기" defaultChecked className="col-start-1 row-start-1 size-[15px] appearance-none border border-[#333] bg-white" />
                      <svg viewBox="0 0 15 15" className="col-start-1 row-start-1 size-[15px]" aria-hidden="true"><path d="M3.500 7.500 6.500 10.500 12 4.500" fill="none" stroke="#111" strokeWidth="1.500" /></svg>
                    </span>
                  </td>
                  <td><button type="button" aria-label="Layer0 색상" className="ml-[11px] block size-5 border border-[#d08a8a] bg-[#ff5757]" /></td>
                </tr>
              </tbody>
            </table>
          </div>
        </section>
        <div className="h-[6px] shrink-0 border border-[#b0b0b0] bg-[#f1f1f1]" />
        <section className="mt-px flex min-h-0 flex-1 flex-col">
          <PanelHeader title="장면" />
          <div className="flex h-8 shrink-0 items-center border-b border-[#a0a0a0] pr-[5px] pb-px pl-[7px]">
            <button type="button" aria-label="장면 업데이트" className="mr-[9px]">
              <svg viewBox="0 0 18 18" className="size-[18px]" fill="none" stroke="#8f8f8f" strokeWidth="1.800" aria-hidden="true">
                <path d="M1.500 7.500Q4 2 9.500 2.500 13 3 15.500 6M16.500 10.500Q14 16 8.500 15.500 5 15 2.500 12M16.500 2V7H11.500M1.500 16V11H6.500" />
              </svg>
            </button>
            <RoundBtn label="장면 추가" plus />
            <span className="w-[9px]" />
            <RoundBtn label="장면 삭제" dim />
            <span className="flex-1" />
            <button type="button" aria-label="장면 아래로" className="mr-4">
              <svg viewBox="0 0 8 14" className="h-[14px] w-2" aria-hidden="true"><path d="M8 2H4.500V10" fill="none" stroke="#888" strokeWidth="2.200" /><path d="M1 9h7l-3.500 4.500z" fill="#888" /></svg>
            </button>
            <button type="button" aria-label="장면 위로" className="mr-[15px]">
              <svg viewBox="0 0 8 14" className="h-[14px] w-2" aria-hidden="true"><path d="M0 12.500H4.500V4" fill="none" stroke="#888" strokeWidth="2.200" /><path d="M1 5h7L4.500.500z" fill="#888" /></svg>
            </button>
            <button type="button" aria-label="보기 옵션" className="mr-2">
              <svg viewBox="0 0 25 18" className="h-[18px] w-[25px]" aria-hidden="true">
                <path d="M1 2h5v5H1zM1 12h5v5H1z" fill="none" stroke="#222" strokeWidth="1.500" />
                <path d="M10 2h7M10 5h4M10 12h7M10 14.500h5M10 17h5" stroke="#333" strokeWidth="1.500" />
                <path d="M19.500 8.500h5.500l-2.700 3z" fill="#000" />
              </svg>
            </button>
            <button type="button" aria-label="세부 정보 표시" className="mr-[13px]">
              <svg viewBox="0 0 12 18" className="h-[18px] w-3" aria-hidden="true">
                <path d="M.5.500h11v17H.500z" fill="#fff" stroke="#777" />
                <path d="M2 2h8l-4 4z" fill="#000" />
                <path d="M0 8h12v10H0z" fill="#000" />
                <path d="M3 13h6M6 10v6" stroke="#fff" strokeWidth="1.600" />
              </svg>
            </button>
            <DetailsBtn />
          </div>
          <div className="flex-1 bg-white" />
        </section>
      </div>
      <div className="flex w-[21px] shrink-0 flex-col items-center border-l border-[#fafafa] py-[6px]">
        <svg viewBox="0 0 10 8" className="mt-[2px] h-2 w-[10px]" aria-hidden="true"><path d="M1 6.500 5 2 9 6.500" fill="none" stroke="#555" strokeWidth="2" /></svg>
        <div className="flex-1" />
        <div className="mb-[66px] h-[21px] w-full bg-[#cdcdcd]" />
        <svg viewBox="0 0 10 8" className="h-2 w-[10px]" aria-hidden="true"><path d="M1 1.500 5 6 9 1.500" fill="none" stroke="#555" strokeWidth="2" /></svg>
      </div>
    </div>
  </aside>
);

/* ---------- status bar ---------- */

const StatusBar = () => (
  <footer className="flex h-[26px] shrink-0 items-end border-t-2 border-[#fcfcfc] bg-[#f1f1f1] pl-[6px] text-[17px] leading-[18px] text-black">
    <svg viewBox="0 0 20 20" className="mr-[15px] size-5 shrink-0" aria-hidden="true">
      <circle cx="10" cy="11" r="8.300" fill="none" stroke="#999" strokeWidth="1.200" />
      <path d="M10 5a3.600 3.600 0 0 1 3.500 4q-.500 2-2 3.500L10.500 17h-1L8.500 12.500Q7 11 6.500 9A3.600 3.600 0 0 1 10 5z" fill="#999" />
    </svg>
    <svg viewBox="0 0 20 20" className="mr-[15px] size-5 shrink-0" aria-hidden="true">
      <circle cx="10" cy="11" r="8" fill="none" stroke="#000" strokeWidth="1.800" />
      <circle cx="10" cy="6.300" r="1.500" fill="#000" />
      <path d="M7.500 8.500h5v5h-1V17h-3V13.500h-1z" fill="#000" />
    </svg>
    <svg viewBox="0 0 20 20" className="size-5 shrink-0" aria-hidden="true">
      <circle cx="10" cy="11" r="8.400" fill="#ddd" stroke="#999" strokeWidth="1.200" />
      <circle cx="10" cy="8" r="3.500" fill="#999" />
      <path d="M3.500 16.500Q4 12.500 10 12.500T16.500 16.500Q10 22 3.500 16.500z" fill="#999" />
    </svg>
    <span className="mr-[10px] mb-[2px] ml-[11px] h-[14px] w-px bg-[#8a8a8a]" />
    <p className="flex-1 pb-px whitespace-nowrap">개체를 선택하십시오. 선택을 확대하려면 Shift를 누르십시오. 여러 항목을 선택하려면 마우스를 끄십시오.</p>
    <span className="mr-[11px] mb-[2px] h-[14px] w-px bg-[#8a8a8a]" />
    <label htmlFor="units" className="mr-[10px] pb-px">단위</label>
    <input id="units" className="mr-1 h-5 w-[250px] shrink-0 border border-b-0 border-[#adb9c6] bg-[#f1f1f1]" />
  </footer>
);

export default function App() {
  return (
    <div className="flex min-h-screen flex-col bg-black py-[42px] font-['Noto_Sans','Noto_Sans_CJK_KR',sans-serif]">
      <nav className="flex h-[26px] shrink-0 items-center gap-[14px] bg-white pt-px pl-[7px] text-[16px] leading-5 text-black">
        {MENUS.map((m) => <button key={m} type="button">{m}</button>)}
      </nav>
      <TopToolbar />
      <div className="flex flex-1">
        <SideToolbar />
        <Viewport />
        <Tray />
      </div>
      <StatusBar />
    </div>
  );
}
